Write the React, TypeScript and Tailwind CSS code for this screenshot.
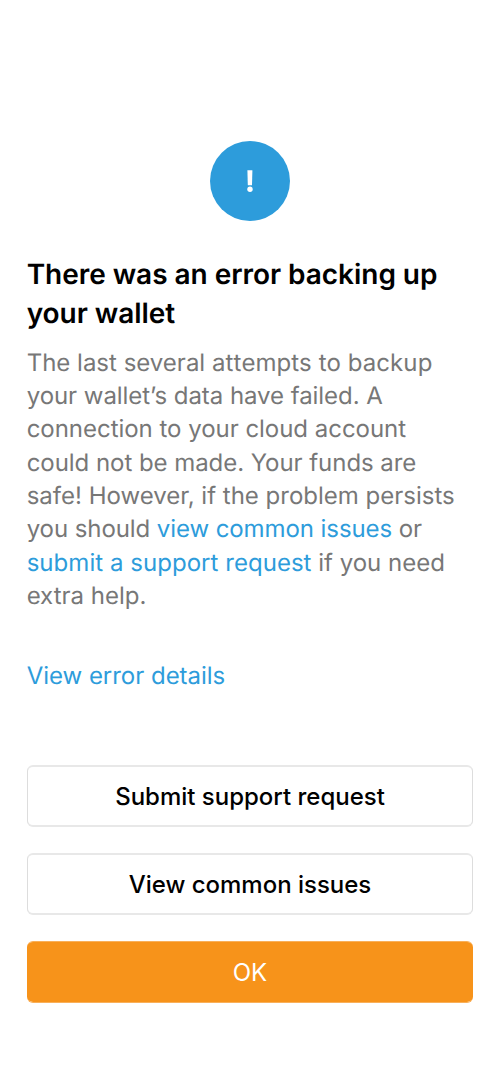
const outlineButton =
  "h-[62px] rounded-[6px] border-x border-y-2 border-x-[#dddddd] border-y-[#e8e8e8] pt-[2px] text-[24px] font-medium tracking-[-0.01px] text-black";

export default function App() {
  return (
    <main className="flex h-[1083px] w-[500px] flex-col bg-white px-[26.67px] pt-[141.33px] font-['Inter',sans-serif] [text-rendering:geometricPrecision]">
      <div className="flex size-20 shrink-0 items-center justify-center self-center rounded-full bg-[#2d9cdb]">
        <svg viewBox="0 0 8 24" className="h-6 w-2 fill-white" aria-hidden="true">
          <path d="M1.4 1.2h5l-.4 15h-4.2z" />
          <circle cx="4" cy="20.3" r="2.7" />
        </svg>
      </div>
      <h1 className="mt-[34px] text-[28px] leading-[39px] font-semibold tracking-[-0.04px] text-black">
        There was an error backing up
        <br />
        your wallet
      </h1>
      <p className="mt-[12.4px] text-[24px] leading-[33.33px] whitespace-nowrap text-[#777777]">
        The last several <span className="tracking-[0.09px]">a<span className="[font-kerning:none]">tt</span>empts to backup</span>
        <br />
        <span className="tracking-[-0.05px]">your wallet’s data have failed. A</span>
        <br />
        <span className="tracking-[-0.03px]">connection to your cloud account</span>
        <br />
        <span className="tracking-[-0.05px]">could not be made. Your funds are</span>
        <br />
        safe! However, if the problem persists
        <br />
        <span className="tracking-[-0.08px]">
          you should <a className="text-[#2d9cdb]">view common issues</a> or
        </span>
        <br />
        <a className="tracking-[0.04px] text-[#2d9cdb]">submit a support request</a> if you need
        <br />
        extra help.
      </p>
      <a className="mt-[46.2px] text-[24px] leading-[33px] tracking-[-0.02px] text-[#2d9cdb]">View error details</a>
      <div className="mt-[73.8px] flex flex-col gap-[26px]">
        <button className={outlineButton}>Submit support request</button>
        <button className={outlineButton}>View common issues</button>
        <button className="h-[62px] rounded-[6px] border-y border-[#f9b05a] bg-[#f7931a] bg-clip-padding pt-[2px] text-[24px] text-white">OK</button>
      </div>
    </main>
  );
}
